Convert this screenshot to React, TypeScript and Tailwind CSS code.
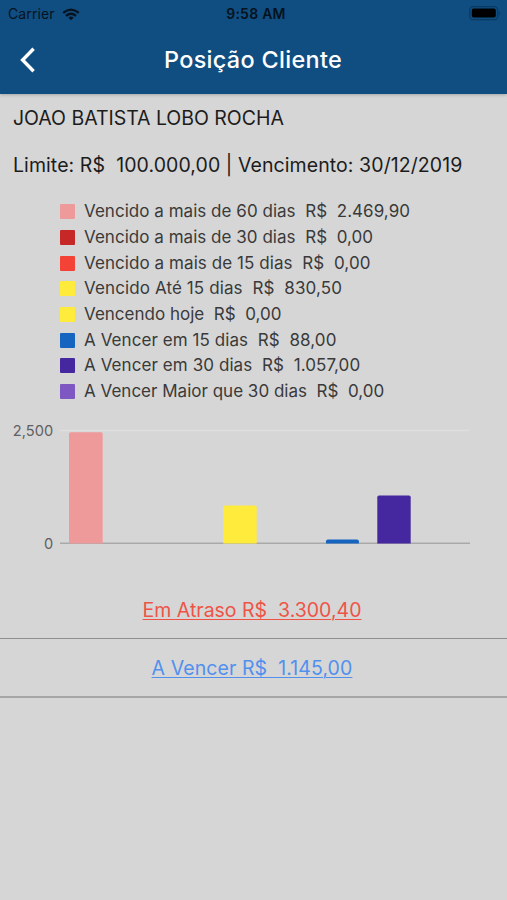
const legend = [
  { color: 'bg-[#ef9a9a]', tracking: 'tracking-[0.03px]', label: 'Vencido a mais de 60 dias', value: '2.469,90' },
  { color: 'bg-[#c62828]', tracking: 'tracking-[0.03px]', label: 'Vencido a mais de 30 dias', value: '0,00' },
  { color: 'bg-[#f44336]', tracking: 'tracking-[0.07px]', label: 'Vencido a mais de 15 dias', value: '0,00' },
  { color: 'bg-[#ffeb3b]', tracking: 'tracking-[0.11px]', label: 'Vencido Até 15 dias', value: '830,50' },
  { color: 'bg-[#ffeb3b]', tracking: 'tracking-[0.01px]', label: 'Vencendo hoje', value: '0,00' },
  { color: 'bg-[#1565c0]', tracking: 'tracking-[0.07px]', label: 'A Vencer em 15 dias', value: '88,00' },
  { color: 'bg-[#4527a0]', tracking: 'tracking-[0.08px]', label: 'A Vencer em 30 dias', value: '1.057,00' },
  { color: 'bg-[#7e57c2]', tracking: 'tracking-[0.01px]', label: 'A Vencer Maior que 30 dias', value: '0,00' },
];

function StatusBar() {
  return (
    <div className="grid h-7 grid-cols-3 items-center pl-2 pr-[5px] text-[14px] leading-none text-[#06121d]">
      <div className="flex items-center gap-[7px]">
        <span className="tracking-[0.1px]">Carrier</span>
        <svg width="18" height="13" viewBox="0 0 18 13" fill="none" stroke="currentColor" strokeWidth="2.3">
          <path d="M1.2 4.8 Q9 -1.6 16.8 4.8" />
          <path d="M4 7.9 Q9 3.7 14 7.9" />
          <path d="M6.3 9.6 Q9 7.6 11.7 9.6 L9 12.3 Z" fill="currentColor" stroke="none" />
        </svg>
      </div>
      <span className="pl-0.5 text-center font-semibold tracking-[0.25px]">9:58 AM</span>
      <svg className="-mt-[2px] justify-self-end" width="33" height="15" viewBox="0 0 33 15">
        <rect x="0.7" y="0.7" width="28" height="13" rx="3.5" fill="none" stroke="#0b3b63" strokeWidth="1.3" />
        <rect x="2.8" y="2.6" width="24" height="9" rx="1.8" fill="#000" />
        <path d="M30 5 Q32.2 7.2 30 9.4 Z" fill="#0b3b63" />
      </svg>
    </div>
  );
}

function Chart() {
  return (
    <svg className="block" width="507" height="140" viewBox="0 415 507 140" fontFamily="Inter, sans-serif">
      <path d="M60 430.5H470" stroke="#dedede" strokeWidth="1.4" />
      <path d="M60 543.3H470" stroke="#a9a9a9" strokeWidth="1.5" />
      <path d="M69 543.5V434q0-1.7 1.7-1.7H101q1.7 0 1.7 1.7V543.5Z" fill="#ef9a9a" />
      <path d="M223.3 543.5V507.2q0-1.7 1.7-1.7H255q1.7 0 1.7 1.7V543.5Z" fill="#ffeb3b" />
      <path d="M326 543.5V541.4q0-1.9 1.9-1.9H357q1.9 0 1.9 1.9V543.5Z" fill="#1565c0" />
      <path d="M377.3 543.5V497.2q0-1.7 1.7-1.7H409q1.7 0 1.7 1.7V543.5Z" fill="#4527a0" />
      <g fill="#606060" fontSize="14.6" textAnchor="end" letterSpacing="0.05">
        <text x="53.3" y="436">2,500</text>
        <text x="53.3" y="548.5">0</text>
      </g>
    </svg>
  );
}

export default function App() {
  return (
    <div className="flex h-[900px] w-[507px] flex-col overflow-hidden bg-[#d6d6d6] font-['Inter',sans-serif] text-[#1c1c1c]">
      <header className="h-[94px] shrink-0 bg-[#104e81] shadow-[0_1px_3px_rgba(0,0,0,0.22)]">
        <StatusBar />
        <div className="grid h-16 grid-cols-[60px_1fr_60px] items-center">
          <svg className="ml-[19px]" width="18" height="26" viewBox="0 0 18 26" fill="none" stroke="#fff" strokeWidth="3.4">
            <path d="M14.6 1.8 L3.6 13 L14.6 24.2" />
          </svg>
          <h1 className="whitespace-nowrap pr-px text-center text-[23.4px] font-medium leading-none tracking-[0.33px] text-white">Posição Cliente</h1>
        </div>
      </header>

      <section className="whitespace-pre pl-[13px] pt-3 text-[19.5px] leading-6">
        <p className="tracking-[-0.03px]">JOAO BATISTA LOBO ROCHA</p>
        <p className="mt-[23px] tracking-[0.08px]">{'Limite: R$  100.000,00 | Vencimento: 30/12/2019'}</p>
      </section>

      <ul className="mt-[22px] pl-[59.5px] text-[17px] text-[#3a3a3a]">
        {legend.map((item) => (
          <li key={item.label} className="flex h-[25.65px] items-center gap-[9.5px] whitespace-pre leading-none">
            <span className={`size-[15px] rounded-[1px] ${item.color}`} />
            <span className={item.tracking}>{`${item.label}  R$  ${item.value}`}</span>
          </li>
        ))}
      </ul>

      <div className="mt-[10.8px]">
        <Chart />
      </div>

      <div className="whitespace-pre text-center text-[19.5px] leading-6">
        <div className="flex h-[84px] items-end justify-center border-b border-[#8f8f8f] pb-4 pr-[3px]">
          <a className="text-[#ee5446] underline decoration-1 underline-offset-[2px]">{'Em Atraso R$  3.300,40'}</a>
        </div>
        <div className="flex h-[59px] items-center justify-center border-b-2 border-[#a6a6a6] pr-[3px] pt-[2px]">
          <a className="tracking-[0.08px] text-[#5290ee] underline decoration-1 underline-offset-[2px]">{'A Vencer R$  1.145,00'}</a>
        </div>
      </div>
    </div>
  );
}
